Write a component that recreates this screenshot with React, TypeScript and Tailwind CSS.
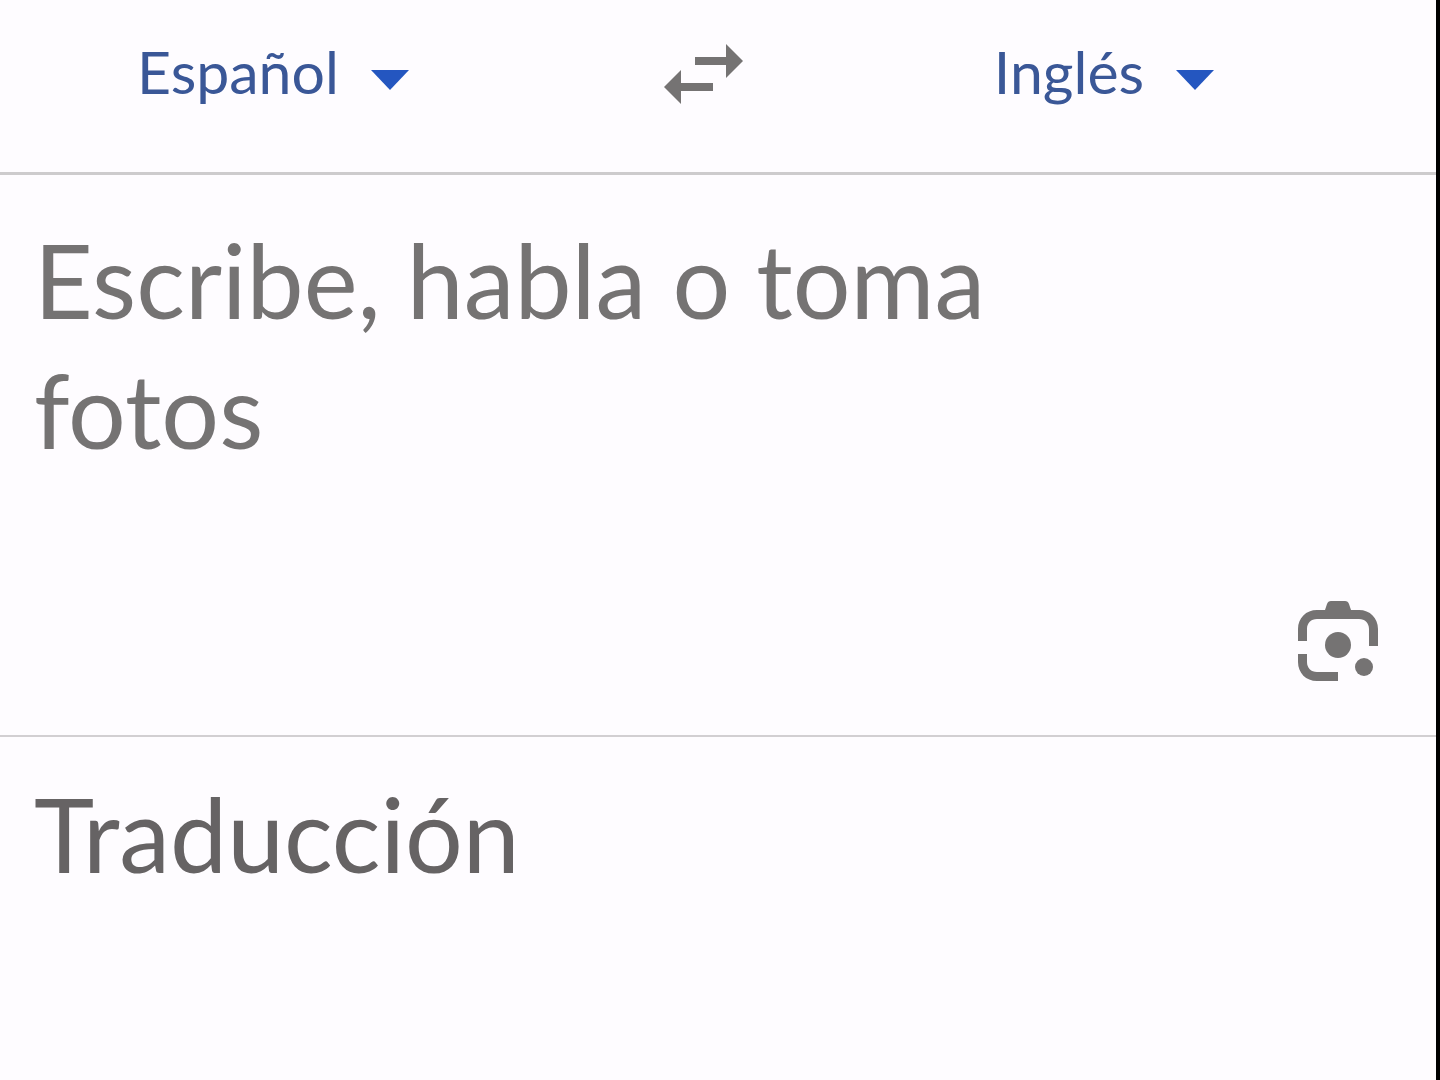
import { useState } from 'react';

const languages = [
  { id: 'es', label: 'Español' },
  { id: 'en', label: 'Inglés' },
  { id: 'fr', label: 'Francés' },
];

interface LanguageSelectProps {
  label: string;
  value: string;
  onChange: (value: string) => void;
}

function LanguageSelect({ label, value, onChange }: LanguageSelectProps) {
  return (
    <div className="grid items-center">
      <select
        aria-label={label}
        value={value}
        onChange={(e) => onChange(e.target.value)}
        className="col-start-1 row-start-1 appearance-none field-sizing-content bg-transparent pr-[70px] text-[59px] leading-[72px] text-[#3a5797] outline-none"
      >
        {languages.map((lang) => (
          <option key={lang.id} value={lang.id}>
            {lang.label}
          </option>
        ))}
      </select>
      <svg
        viewBox="0 0 38 20"
        className="pointer-events-none col-start-1 row-start-1 mt-4 h-5 w-[38px] justify-self-end"
        aria-hidden="true"
      >
        <path d="M0 0h38L19 20z" fill="#2456c0" />
      </svg>
    </div>
  );
}

function SwapIcon() {
  return (
    <svg viewBox="0 0 80 60" className="h-[60px] w-20" fill="#757373" aria-hidden="true">
      <path d="M31 13h31V0l17 17-17 17V21H31z" />
      <path d="M49 39H17V26L0 43l17 17V47h32z" />
    </svg>
  );
}

function LensIcon() {
  return (
    <svg viewBox="0 0 80 80" className="size-20" fill="#757373" aria-hidden="true">
      <path d="M0 40V28C0 17 8 9 19 9h8l2-6q1-3 4-3h14q3 0 4 3l2 6h8c11 0 19 8 19 19v17h-9V28c0-6-4-10-10-10H19C13 18 9 22 9 28v12z" />
      <path d="M0 53h9v8c0 6 4 10 10 10h21v9H19C8 80 0 72 0 61z" />
      <circle cx="40" cy="44" r="13" />
      <circle cx="66" cy="66" r="9" />
    </svg>
  );
}

export default function App() {
  const [source, setSource] = useState('es');
  const [target, setTarget] = useState('en');
  const [text, setText] = useState('');

  const swapLanguages = () => {
    setSource(target);
    setTarget(source);
  };

  return (
    <div className="min-h-screen border-r-4 border-black bg-[#fefcff] font-['Lato',sans-serif]">
      <header className="grid grid-cols-[1fr_auto_1fr] items-start border-b-3 border-[#cdcbcd] pt-9 pb-16">
        <div className="flex justify-center pr-[146px]">
          <LanguageSelect label="Idioma de origen" value={source} onChange={setSource} />
        </div>
        <button type="button" aria-label="Intercambiar idiomas" onClick={swapLanguages} className="mt-2 -ml-7">
          <SwapIcon />
        </button>
        <div className="flex justify-center pl-7">
          <LanguageSelect label="Idioma de destino" value={target} onChange={setTarget} />
        </div>
      </header>

      <main>
        <section className="border-b-2 border-[#d2cfd2] pt-10 pr-[58px] pb-[54px] pl-[34px]">
          <textarea
            aria-label="Texto"
            rows={2}
            value={text}
            onChange={(e) => setText(e.target.value)}
            placeholder="Escribe, habla o toma fotos"
            className="block w-4/5 resize-none overflow-hidden bg-transparent text-[102px] leading-[130px] text-[#757373] outline-none placeholder:text-[#757373]"
          />
          <div className="mt-[126px] flex justify-end">
            <button type="button" aria-label="Buscar con la cámara">
              <LensIcon />
            </button>
          </div>
        </section>

        <section className="px-[34px] pt-8">
          <p className="text-[102px] leading-[130px] text-[#666364]">Traducción</p>
        </section>
      </main>
    </div>
  );
}
